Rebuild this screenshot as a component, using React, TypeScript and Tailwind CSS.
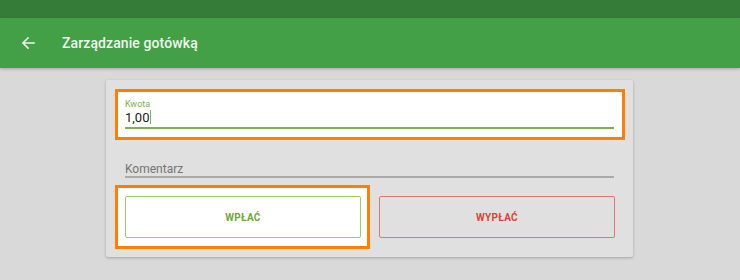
import { useState } from "react";

function BackArrow() {
  return (
    <svg width="14" height="14" viewBox="0 0 14 14" fill="none" aria-hidden>
      <path
        d="M13 7H2M7 2L2 7l5 5"
        stroke="#eef5ee"
        strokeWidth="1.6"
        strokeLinecap="square"
      />
    </svg>
  );
}

export default function App() {
  const [amount] = useState("1,00");

  return (
    <div
      className="w-[740px] h-[280px] bg-[#d9d9d9] overflow-hidden"
      style={{ fontFamily: "Roboto, 'Noto Sans', sans-serif" }}
    >
      {/* Status bar */}
      <div className="h-[18px] bg-[#367c39]" />

      {/* Toolbar */}
      <div className="h-[50px] bg-[#43a047] flex items-center pl-[21px] shadow-[0_1px_3px_rgba(0,0,0,0.25)]">
        <BackArrow />
        <h1 className="ml-[27px] text-[14px] font-medium leading-none text-[#eef5ee] tracking-[0.1px]">
          Zarządzanie gotówką
        </h1>
      </div>

      {/* Card */}
      <div className="ml-[106px] mt-[12px] w-[527px] bg-[#e0e0e0] rounded-[2px] shadow-[0_1px_3px_rgba(0,0,0,0.25)] pt-[9px] pb-[8px] pl-[9px] pr-[8px]">
        {/* Amount field (highlighted) */}
        <div className="h-[51px] w-[510px] border-[3px] border-[#ff8000] bg-white pl-[7px] pr-[8px] pt-[7px]">
          <div className="text-[9px] leading-[11px] text-[#7cb342]">Kwota</div>
          <div className="flex items-center h-[14px]">
            <span className="text-[13px] leading-none text-[#222]">{amount}</span>
            <span className="ml-[1px] w-[1px] h-[14px] bg-[#7cb342]" />
          </div>
          <div className="mt-[3px] h-[2px] bg-[#7cb342]" />
        </div>

        {/* Comment field */}
        <div className="pl-[10px] pr-[11px] pt-[22px]">
          <div className="text-[12px] leading-[14px] text-[#757575]">Komentarz</div>
          <div className="h-[2px] bg-[#aaaaaa]" />
        </div>

        {/* Buttons */}
        <div className="mt-[7px] flex items-start">
          <div className="w-[255px] h-[64px] border-[3px] border-[#ff8000] bg-white pl-[7px] pr-[6px] pt-[8px]">
            <button className="w-full h-[42px] border border-[#9ccc65] rounded-[2px] bg-white text-[10px] font-bold text-[#6fa83a] tracking-[0.3px]">
              WPŁAĆ
            </button>
          </div>
          <button className="ml-[9px] mt-[11px] w-[236px] h-[42px] border border-[#e57373] rounded-[2px] bg-[#e0e0e0] text-[10px] font-bold text-[#e0403a] tracking-[0.3px]">
            WYPŁAĆ
          </button>
        </div>
      </div>
    </div>
  );
}
